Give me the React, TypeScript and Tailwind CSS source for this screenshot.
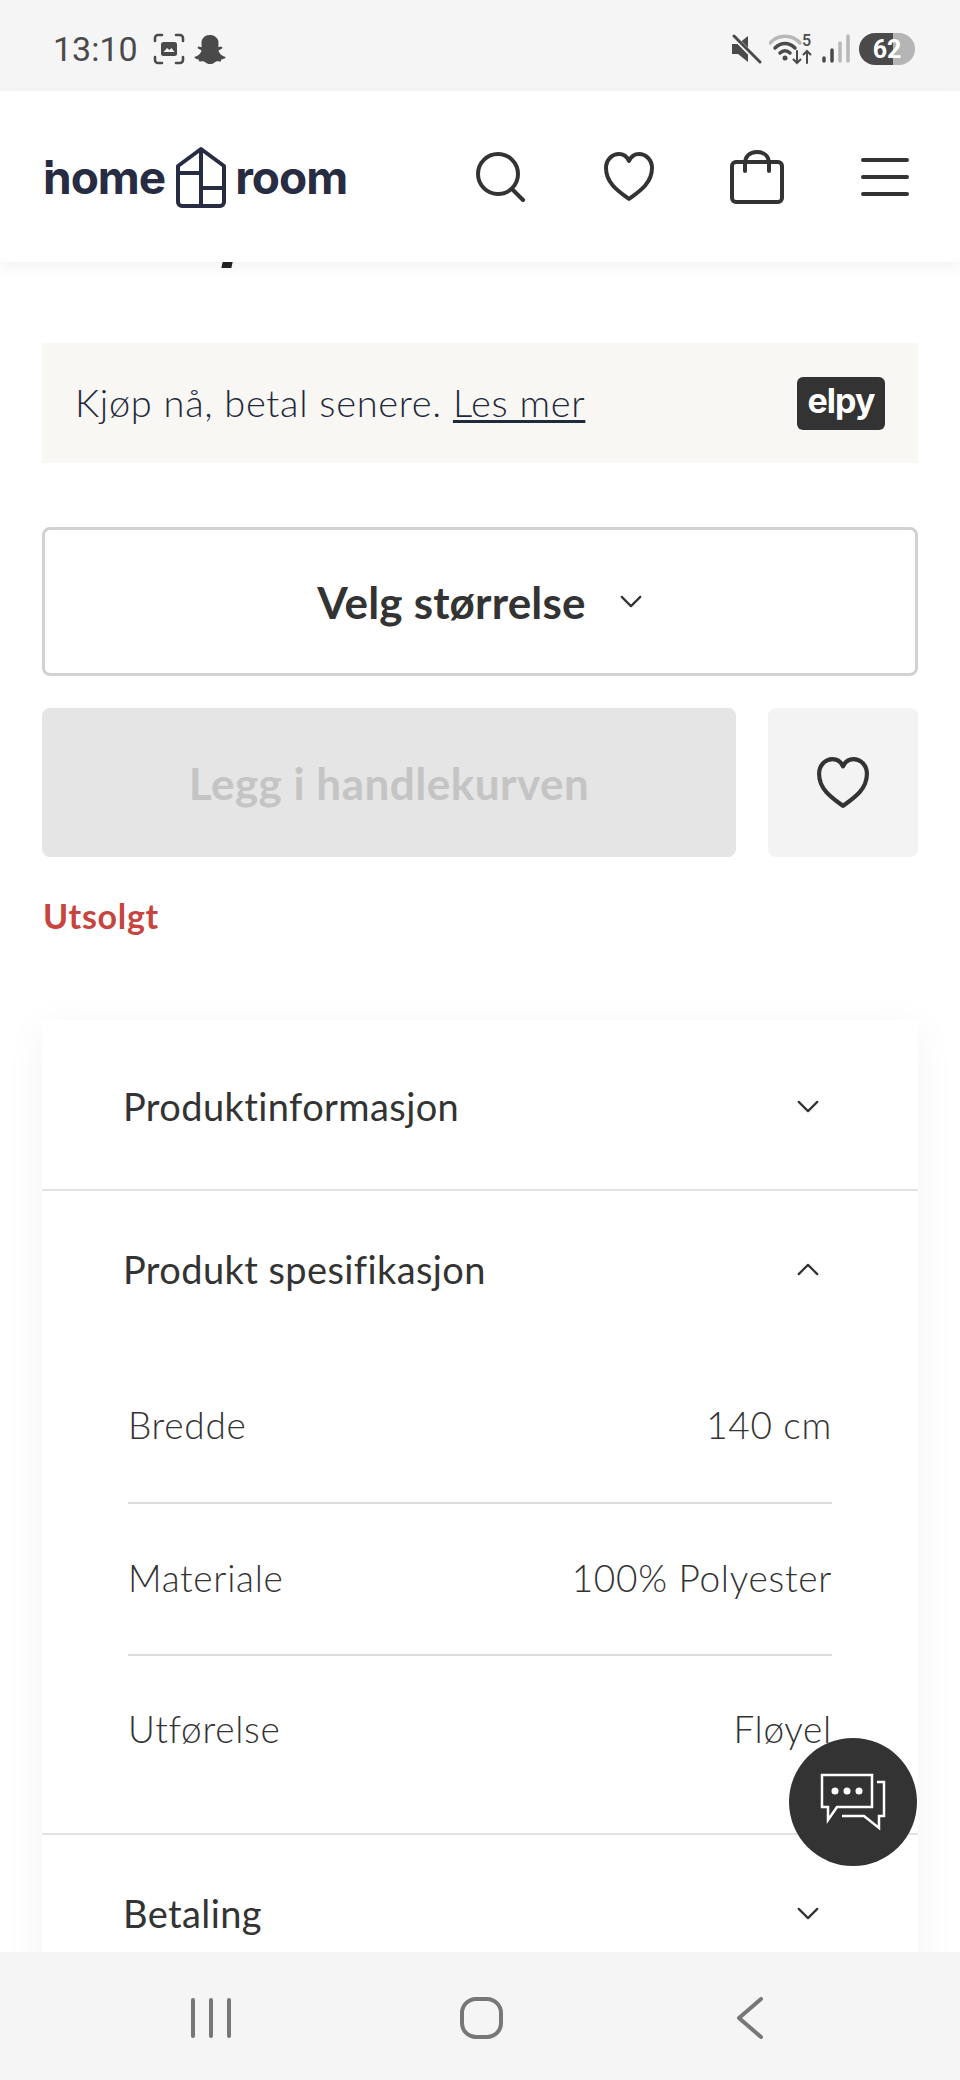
import { FaSnapchatGhost } from "react-icons/fa";

function ChevronDown({ className }: { className?: string }) {
  return (
    <svg viewBox="0 0 24 14" className={className} fill="none" stroke="currentColor" strokeWidth="2.4" strokeLinecap="round" strokeLinejoin="round">
      <path d="M2 2l10 10L22 2" />
    </svg>
  );
}

function Heart({ className }: { className?: string }) {
  return (
    <svg viewBox="0 0 50 50" className={className} fill="none" stroke="currentColor" strokeWidth="4" strokeLinejoin="round">
      <path d="M25 47C14 39 2 31 2 16 2 8 8 2 15 2c4.600 0 8 2.500 10 7 2-4.500 5.400-7 10-7 7 0 13 6 13 14 0 15-12 23-23 31z" />
    </svg>
  );
}

function StatusBar() {
  return (
    <div className="flex h-[91px] shrink-0 items-center justify-between bg-[#f5f5f5] pl-[53px] pr-[45px] pt-[7px] font-['Roboto',sans-serif] text-[#4a4a4a]">
      <div className="flex items-center">
        <span className="text-[34px] leading-none">13:10</span>
        <svg viewBox="0 0 32 32" className="ml-[15px] h-[32px] w-[32px]" fill="none" stroke="currentColor" strokeWidth="2.600" strokeLinecap="round">
          <path d="M2 8V5a3 3 0 013-3h4M23 2h4a3 3 0 013 3v3M30 24v3a3 3 0 01-3 3h-4M9 30H5a3 3 0 01-3-3v-3" />
          <rect x="8" y="9" width="16" height="14" rx="2.500" fill="currentColor" stroke="none" />
          <path d="M10.500 19l3.500-4 2.500 2 2-2 3 4z" fill="#f5f5f5" stroke="none" />
        </svg>
        <FaSnapchatGhost className="ml-[9px] h-[31px] w-[32px]" />
      </div>
      <div className="flex items-center">
        <svg viewBox="0 0 30 30" className="h-[30px] w-[30px]" fill="currentColor">
          <path d="M0 10h6l10-8v26L6 20H0z" />
          <path d="M2 3l26 26" stroke="#f5f5f5" strokeWidth="5" />
          <path d="M2 2l26 26" stroke="currentColor" strokeWidth="3" strokeLinecap="round" />
        </svg>
        <svg viewBox="0 -6 44 38" className="-mt-[6px] ml-[7px] h-[38px] w-[44px]" fill="none" strokeLinecap="round">
          <path d="M1 10C9 1 23 1 31 10" stroke="#b8b8b8" strokeWidth="3.500" />
          <path d="M6 15c6-6 14-6 20 0" stroke="currentColor" strokeWidth="3.500" />
          <path d="M11 20c3-3 7-3 10 0" stroke="currentColor" strokeWidth="3.500" />
          <circle cx="16" cy="25" r="2.500" fill="currentColor" />
          <path d="M28 18v12m-3.500-3.500L28 30l3.500-3.500M38 30V18m-3.500 3.500L38 18l3.500 3.500" stroke="currentColor" strokeWidth="2" />
          <text x="33" y="13" fontSize="16" fontWeight="500" fill="currentColor" stroke="none" fontFamily="Roboto, sans-serif">5</text>
        </svg>
        <svg viewBox="0 0 28 30" className="ml-[9px] h-[30px] w-[28px]" fill="none" strokeWidth="3.500" strokeLinecap="round">
          <path d="M2 24v3M10 16v11" stroke="currentColor" />
          <path d="M18 9v18M26 2v25" stroke="#b8b8b8" />
        </svg>
        <div className="relative ml-[9px] flex h-[32px] w-[56px] overflow-hidden rounded-full">
          <div className="w-[34px] bg-[#4a4a4a]" />
          <div className="flex-1 bg-[#b5b5b5]" />
          <span className="absolute inset-0 flex items-center justify-center text-[25px] leading-none font-bold text-white">62</span>
        </div>
      </div>
    </div>
  );
}

function Header() {
  return (
    <header className="relative z-10 flex h-[171px] shrink-0 items-center justify-between bg-white pl-[43px] pr-[43px] shadow-[0_6px_14px_rgba(0,0,0,0.05)]">
      <div className="flex items-center font-['Inter',sans-serif] text-[46px] leading-none font-bold tracking-[-1px] text-[#272c43]">
        <span className="relative pt-[1px]">
          home
          <span className="absolute top-[14px] left-0 h-[3px] w-[10px] bg-white" />
        </span>
        <svg viewBox="0 0 50 62" className="ml-[11px] mr-[9px] h-[62px] w-[50px]" fill="none" stroke="currentColor" strokeWidth="4" strokeLinejoin="round">
          <path d="M2 20L25 3l23 17v36a4 4 0 01-4 4H6a4 4 0 01-4-4z" />
          <path d="M25 3v57M2 27h23M25 42h23" />
        </svg>
        <span className="pt-[1px]">room</span>
      </div>
      <div className="flex items-center gap-[64px] text-[#333]">
        <div className="flex h-[64px] w-[64px] items-center justify-center">
          <svg viewBox="0 0 50 50" className="h-[50px] w-[50px]" fill="none" stroke="currentColor" strokeWidth="4" strokeLinecap="round">
            <circle cx="22" cy="22" r="20" />
            <path d="M36 37l11 11" />
          </svg>
        </div>
        <div className="flex h-[64px] w-[64px] items-center justify-center">
          <Heart className="h-[50px] w-[50px]" />
        </div>
        <div className="flex h-[64px] w-[64px] items-center justify-center">
          <svg viewBox="0 0 54 54" className="h-[54px] w-[54px]" fill="none" stroke="currentColor" strokeWidth="4" strokeLinecap="round" strokeLinejoin="round">
            <rect x="2" y="12" width="50" height="40" rx="4" />
            <path d="M15 21v-7C15 6 20 2 27 2s12 4 12 12v7" />
          </svg>
        </div>
        <div className="flex h-[64px] w-[64px] flex-col items-center justify-center gap-[13px]">
          <div className="h-[4px] w-[48px] rounded-full bg-[#333]" />
          <div className="h-[4px] w-[48px] rounded-full bg-[#333]" />
          <div className="h-[4px] w-[48px] rounded-full bg-[#333]" />
        </div>
      </div>
    </header>
  );
}

function AccordionHead({ title, open, className }: { title: string; open?: boolean; className: string }) {
  return (
    <div className={`flex items-center justify-between pl-[81px] pr-[98px] ${className}`}>
      <span className="text-[38px] leading-none font-normal tracking-[0.4px] text-[#333]">{title}</span>
      <ChevronDown className={`h-[13px] w-[24px] text-[#333] ${open ? "rotate-180" : ""}`} />
    </div>
  );
}

const specs = [
  { label: "Bredde", value: "140 cm", h: "h-[157px]" },
  { label: "Materiale", value: "100% Polyester", h: "h-[152px] pb-[3px]" },
  { label: "Utførelse", value: "Fløyel", h: "h-[152px] pb-[7px]" },
];

export default function App() {
  return (
    <div className="relative flex h-[2080px] w-[960px] flex-col overflow-hidden bg-white font-['Lato',sans-serif]">
      <StatusBar />
      <Header />
      <main className="min-h-0 flex-1 overflow-hidden px-[42px]">
        <div className="ml-[180px] h-[6px] w-[10px] -skew-x-12 bg-[#222]" />
        <div className="mt-[75px] flex h-[120px] items-center justify-between bg-[#f9f7f4] pl-[33px] pr-[33px]">
          <p className="-mt-[2px] text-[38px] leading-none font-light tracking-[0.7px] text-[#1f2a3c]">
            Kjøp nå, betal senere. <span className="underline decoration-[3px] underline-offset-[3px]">Les mer</span>
          </p>
          <div className="flex h-[53px] w-[88px] items-center justify-center rounded-[6px] bg-[#333] font-['Inter',sans-serif] text-[34px] leading-none font-bold tracking-[-1px] text-white">
            <span className="-mt-[4px]">elpy</span>
          </div>
        </div>
        <div className="mt-[64px] flex h-[149px] items-center justify-center rounded-[8px] border-[3px] border-[#d2d2d2] bg-white text-[#333]">
          <span className="text-[44px] leading-none font-bold tracking-[0.2px]">Velg størrelse</span>
          <ChevronDown className="ml-[33px] h-[13px] w-[24px]" />
        </div>
        <div className="mt-[32px] flex gap-[32px]">
          <div className="flex h-[149px] flex-1 items-center justify-center rounded-[8px] bg-[#e5e5e5] text-[44px] leading-none font-bold tracking-[0.5px] text-[#c4c4c4]">
            Legg i handlekurven
          </div>
          <div className="flex h-[149px] w-[150px] items-center justify-center rounded-[8px] bg-[#f3f3f3] text-[#333]">
            <Heart className="h-[52px] w-[52px]" />
          </div>
        </div>
        <p className="mt-[42px] ml-[1px] text-[34px] leading-[34px] font-bold tracking-[0.7px] text-[#c8453f]">Utsolgt</p>
        <section className="mt-[87px] bg-white shadow-[0_8px_40px_rgba(0,0,0,0.05)]">
          <AccordionHead title="Produktinformasjon" className="h-[171px] border-b-[2px] border-[#e2e2e2] pt-[3px]" />
          <AccordionHead title="Produkt spesifikasjon" open className="h-[156px]" />
          <div className="px-[86px]">
            {specs.map((row, i) => (
              <div
                key={row.label}
                className={`flex items-center justify-between text-[37px] leading-none font-light tracking-[0.7px] text-[#333] ${row.h} ${i < 2 ? "border-b-[2px] border-[#dcdcdc]" : ""}`}
              >
                <span>{row.label}</span>
                <span>{row.value}</span>
              </div>
            ))}
          </div>
          <div className="h-[27px] border-b-[2px] border-[#e2e2e2]" />
          <AccordionHead title="Betaling" className="h-[156px]" />
        </section>
      </main>
      <nav className="relative z-10 flex h-[128px] shrink-0 items-center bg-[#f5f5f5] pt-[4px] text-[#777]">
        <div className="ml-[191px] flex gap-[14px]">
          <div className="h-[40px] w-[4px] rounded-full bg-[#777]" />
          <div className="h-[40px] w-[4px] rounded-full bg-[#777]" />
          <div className="h-[40px] w-[4px] rounded-full bg-[#777]" />
        </div>
        <div className="ml-[229px] h-[42px] w-[43px] rounded-[16px] border-[4px] border-[#777]" />
        <svg viewBox="0 0 28 42" className="ml-[233px] h-[42px] w-[28px]" fill="none" stroke="currentColor" strokeWidth="4" strokeLinecap="round" strokeLinejoin="round">
          <path d="M25 2L3 21l22 19" />
        </svg>
      </nav>
      <div className="absolute top-[1738px] left-[789px] z-20 flex h-[128px] w-[128px] items-center justify-center rounded-full bg-[#333]">
        <svg viewBox="0 0 66 58" className="h-[58px] w-[66px]" fill="none" stroke="white" strokeWidth="2.500">
          <path d="M2 2h50v32H17L8 47V34H2z" />
          <path d="M57 9h7v34h-5v12l-15-12H22" />
          <circle cx="15" cy="18" r="3.500" fill="white" stroke="none" />
          <circle cx="27" cy="18" r="3.500" fill="white" stroke="none" />
          <circle cx="39" cy="18" r="3.500" fill="white" stroke="none" />
        </svg>
      </div>
    </div>
  );
}
